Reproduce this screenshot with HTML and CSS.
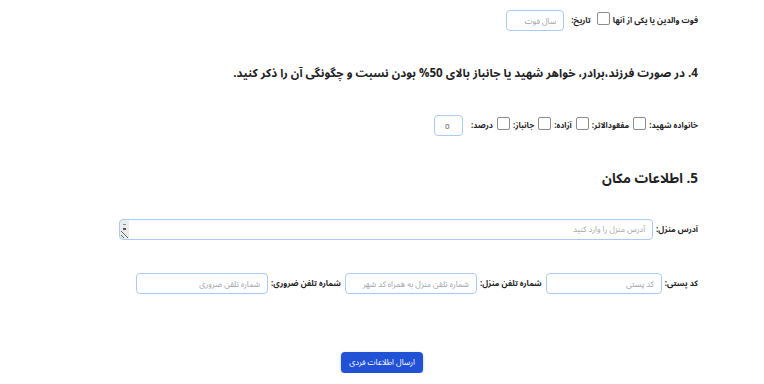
FILE: index.html
```html
<!DOCTYPE html>
<html lang="fa" dir="rtl">
<head>
<meta charset="utf-8">
<title>فرم</title>
<link rel="stylesheet" href="styles.css">
</head>
<body>
<form class="page">
  <div class="row">
    <label class="lbl">فوت والدین یا یکی از آنها</label>
    <input type="checkbox" class="chk">
    <label class="lbl lbl-gap">تاریخ:</label>
    <input type="text" class="field w-year" placeholder="سال فوت">
  </div>

  <h2 class="heading">4. در صورت فرزند،برادر، خواهر شهید یا جانباز بالای 50% بودن نسبت و چگونگی آن را ذکر کنید.</h2>

  <div class="row">
    <label class="lbl">خانواده شهید:</label>
    <input type="checkbox" class="chk">
    <label class="lbl">مفقودالاثر:</label>
    <input type="checkbox" class="chk">
    <label class="lbl">آزاده:</label>
    <input type="checkbox" class="chk">
    <label class="lbl">جانباز:</label>
    <input type="checkbox" class="chk">
    <label class="lbl">درصد:</label>
    <input type="text" class="field w-pct num" value="0">
  </div>

  <h2 class="heading heading-lg">5. اطلاعات مکان</h2>

  <div class="row row-address">
    <label class="lbl">آدرس منزل:</label>
    <textarea class="field area" placeholder="آدرس منزل را وارد کنید"></textarea>
  </div>

  <div class="row row-contact">
    <label class="lbl">کد پستی:</label>
    <input type="text" class="field w-post" placeholder="کد پستی">
    <label class="lbl">شماره تلفن منزل:</label>
    <input type="text" class="field w-tel" placeholder="شماره تلفن منزل به همراه کد شهر">
    <label class="lbl">شماره تلفن ضروری:</label>
    <input type="text" class="field w-tel" placeholder="شماره تلفن ضروری">
  </div>

  <div class="actions">
    <button type="button" class="btn">ارسال اطلاعات فردی</button>
  </div>
</form>
</body>
</html>
```

FILE: styles.css
```css
html, body {
  margin: 0;
  padding: 0;
  background: #ffffff;
}

body {
  font-family: "Open Sans", "Noto Sans Arabic", sans-serif;
  color: #212529;
}

.page {
  display: flex;
  flex-direction: column;
  gap: 32px;
  padding: 10px 66px 0 0;
}

.row {
  display: flex;
  align-items: center;
  height: 21px;
}

.row-address {
  margin-top: -1px;
}

.row-contact {
  margin-top: 1px;
}

.lbl {
  font-size: 8px;
  font-weight: bold;
  color: #1f2326;
  margin-left: 3px;
  white-space: nowrap;
}

.lbl-gap {
  margin-right: 2px;
}

.chk {
  appearance: none;
  -webkit-appearance: none;
  box-sizing: border-box;
  width: 13px;
  height: 13px;
  margin: 0 0 4px 4px;
  border: 1px solid #8d8d8d;
  border-radius: 2px;
  background: #ffffff;
}

.field {
  box-sizing: border-box;
  height: 21px;
  border: 1px solid #a9cbf5;
  border-radius: 4px;
  font-family: inherit;
  font-size: 8px;
  padding: 0 7px;
  color: #495057;
  background: #fff;
}

.field::placeholder {
  color: #a0a4a8;
}

.w-year { width: 58px; margin-right: 4px; }
.w-pct  { width: 29px; margin-right: 5px; }
.w-post { width: 116px; margin-left: 4px; }
.w-tel  { width: 132px; margin-left: 4px; }

.num {
  text-align: left;
  padding-left: 10px;
  color: #495057;
}

.area {
  width: 534px;
  resize: vertical;
  padding-top: 3px;
  line-height: 12px;
  overflow-y: scroll;
  background:
    linear-gradient(#8a8a8a, #8a8a8a) 3px 4px / 3px 1px no-repeat,
    linear-gradient(#555555, #555555) 3px 8px / 3px 2px no-repeat,
    linear-gradient(to right, #ebebeb 0 9px, #ffffff 9px);
}

.area::-webkit-scrollbar {
  width: 9px;
}

.area::-webkit-scrollbar-track {
  background: #ebebeb;
}

.area::-webkit-scrollbar-thumb {
  background: #c1c1c1;
}

.heading {
  margin: 0;
  font-size: 11.6px;
  font-weight: bold;
  line-height: 20px;
  color: #1f2326;
}

.heading-lg {
  font-size: 13.5px;
}

.actions {
  display: flex;
  justify-content: center;
  margin-top: 26px;
  padding-left: 66px;
}

.btn {
  height: 21px;
  padding: 0 8px;
  border: none;
  border-radius: 4px;
  background: #2152d6;
  color: #ffffff;
  font-family: inherit;
  font-size: 8px;
  box-shadow: 0 1px 3px rgba(0, 0, 0, 0.25);
}
```
